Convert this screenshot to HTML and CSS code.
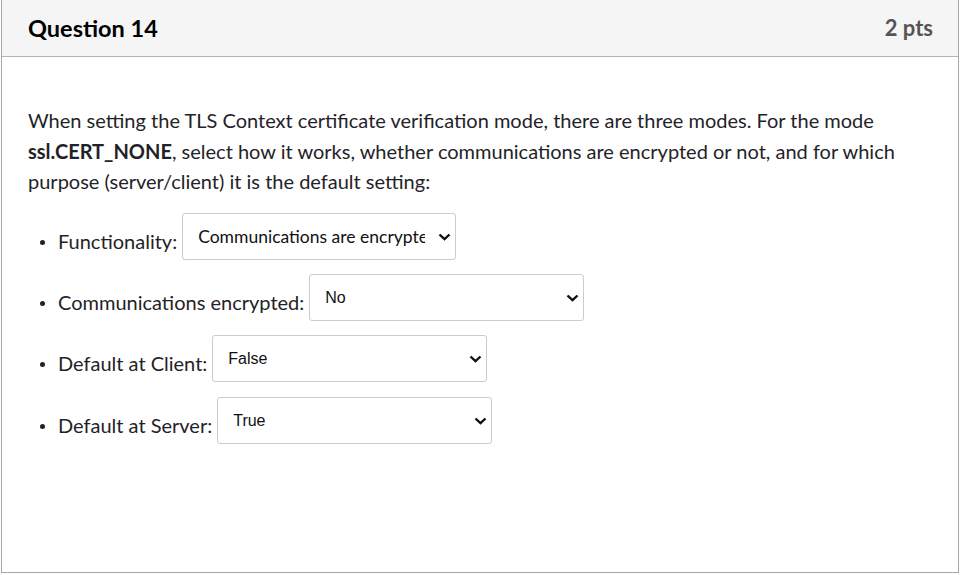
FILE: index.html
```html
<!DOCTYPE html>
<html>
<head>
<meta charset="utf-8">
<link rel="stylesheet" href="styles.css">
</head>
<body>
<div class="card">
  <div class="header">
    <h2 class="title">Question 14</h2>
    <div class="pts">2 pts</div>
  </div>
  <div class="content">
    <p class="text">When setting the TLS Context certificate verification mode, there are three modes. For the mode <strong>ssl.CERT_NONE</strong>, select how it works, whether communications are encrypted or not, and for which purpose (server/client) it is the default setting:</p>
    <ul class="items">
      <li class="item"><span class="bullet"></span><span class="label">Functionality:</span>
        <span class="sel"><select class="lato"><option>Communications are encrypted</option></select><svg class="chev" viewBox="0 0 13 8" width="13" height="8"><path d="M1.5 1.5 L6.5 6.2 L11.5 1.5" fill="none" stroke="#111" stroke-width="2.4"/></svg></span></li>
      <li class="item"><span class="bullet"></span><span class="label">Communications encrypted:</span>
        <span class="sel"><select><option>No</option></select><svg class="chev" viewBox="0 0 13 8" width="13" height="8"><path d="M1.5 1.5 L6.5 6.2 L11.5 1.5" fill="none" stroke="#111" stroke-width="2.4"/></svg></span></li>
      <li class="item"><span class="bullet"></span><span class="label">Default at Client:</span>
        <span class="sel"><select><option>False</option></select><svg class="chev" viewBox="0 0 13 8" width="13" height="8"><path d="M1.5 1.5 L6.5 6.2 L11.5 1.5" fill="none" stroke="#111" stroke-width="2.4"/></svg></span></li>
      <li class="item"><span class="bullet"></span><span class="label">Default at Server:</span>
        <span class="sel"><select><option>True</option></select><svg class="chev" viewBox="0 0 13 8" width="13" height="8"><path d="M1.5 1.5 L6.5 6.2 L11.5 1.5" fill="none" stroke="#111" stroke-width="2.4"/></svg></span></li>
    </ul>
  </div>
</div>
</body>
</html>
```
FILE: styles.css
```css
html, body {
  margin: 0;
  padding: 0;
  background: #fff;
}
body {
  font-family: Lato, "Open Sans", sans-serif;
  color: #2d3b45;
}
.card {
  margin-left: 1px;
  width: 956px;
  height: 572px;
  border: 1px solid #a6a6a6;
  border-top: none;
  box-sizing: content-box;
}
.header {
  height: 57px;
  background: #f5f5f5;
  border-bottom: 1px solid #b4b4b4;
  display: flex;
  align-items: center;
  justify-content: space-between;
  padding: 0 25px 1px 26px;
  box-sizing: border-box;
}
.title {
  margin: 0;
  font-size: 23.5px;
  font-weight: 700;
  color: #000;
}
.pts {
  font-size: 22px;
  font-weight: 700;
  color: #555;
}
.content {
  padding: 0 26px;
}
.text {
  margin: 48px 0 0 0;
  font-size: 20px;
  line-height: 30.6px;
  color: #1f2328;
}
.text strong {
  font-weight: 700;
}
.items {
  list-style: none;
  margin: 16px 0 0 0;
  padding: 0;
  font-size: 20px;
  color: #1f2328;
}
.item {
  display: flex;
  align-items: flex-start;
  margin-bottom: 14px;
  height: 47.3px;
}
.bullet {
  width: 5px;
  height: 5px;
  border-radius: 50%;
  background: #1f2328;
  margin: 27px 13px 0 12px;
  flex: none;
}
.label {
  padding-top: 16px;
  margin-right: 5px;
  white-space: nowrap;
}
.sel {
  position: relative;
  display: block;
  flex: none;
}
.sel select {
  display: block;
  appearance: none;
  -webkit-appearance: none;
  width: 275px;
  height: 47px;
  border: 1px solid #c7cdd1;
  border-radius: 3px;
  background: #fff;
  padding: 0 30px 0 15px;
  font-family: "Liberation Sans", Arial, sans-serif;
  font-size: 16px;
  color: #111;
  box-sizing: border-box;
}
.sel select.lato {
  font-family: Lato, sans-serif;
  font-size: 17.5px;
  padding-left: 15px;
  width: 274px;
}
.chev {
  position: absolute;
  right: 5px;
  top: 20px;
  pointer-events: none;
}
```
